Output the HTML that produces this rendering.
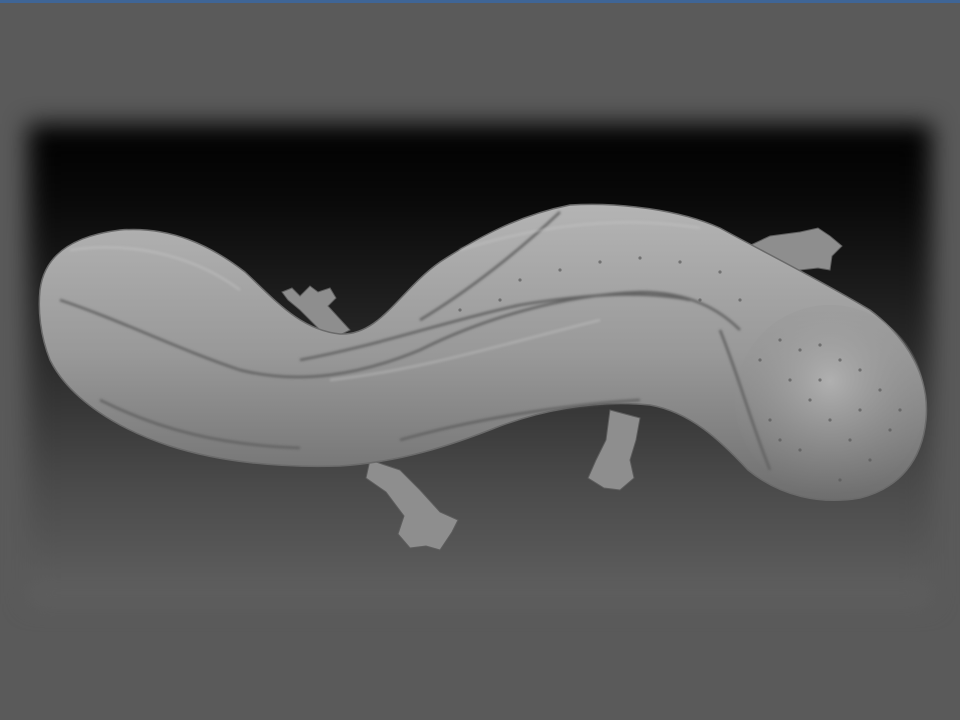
<!DOCTYPE html>
<html><head><meta charset="utf-8"><style>
html,body{margin:0;padding:0;width:960px;height:720px;overflow:hidden;background:#5a5a5a;font-family:"Liberation Sans",sans-serif}
.top{position:absolute;left:0;top:0;width:960px;height:3px;background:#3f6596}
.panel{position:absolute;left:28px;top:124px;width:904px;height:480px;background:linear-gradient(#000 0%,#080808 15%,#262626 45%,#4a4a4a 75%,#606060 100%);filter:blur(12px)}
svg{position:absolute;left:0;top:0}
</style></head><body>
<div class="top"></div>
<div class="panel"></div>
<svg width="960" height="720" viewBox="0 0 960 720">
<defs>
<linearGradient id="b" x1="0" y1="0" x2="0" y2="1">
<stop offset="0" stop-color="#b4b4b4"/><stop offset="0.5" stop-color="#999"/><stop offset="1" stop-color="#6e6e6e"/>
</linearGradient>
<radialGradient id="h" cx="0.5" cy="0.4" r="0.6">
<stop offset="0" stop-color="#b0b0b0"/><stop offset="1" stop-color="#8a8a8a" stop-opacity="0"/>
</radialGradient>
<filter id="s"><feGaussianBlur stdDeviation="1.2"/></filter>
</defs>
<g fill="#8e8e8e" stroke="#5e5e5e" stroke-width="1">
<path d="M330 340 L300 310 L288 300 L282 292 L292 288 L300 296 L310 286 L318 292 L330 288 L336 298 L328 306 L350 330 Z"/>
<path d="M740 250 L770 236 L800 232 L818 228 L830 236 L842 246 L832 256 L830 270 L818 268 L800 270 L780 272 L760 272 Z"/>
<path d="M370 460 L400 470 L420 490 L440 512 L458 520 L452 532 L440 550 L426 546 L410 548 L398 534 L404 516 L386 492 L366 478 Z"/>
<path d="M610 410 L640 418 L636 440 L630 460 L634 478 L620 490 L604 488 L588 478 L596 460 L606 440 Z"/>
</g>
<path d="M40 290 C45 250 80 235 120 230 C170 226 210 245 245 272 C275 300 300 330 340 334 C380 336 400 290 440 262 C480 236 520 215 570 205 C620 202 680 210 720 228 C760 250 820 280 870 310 C910 340 930 380 926 420 C922 460 900 488 860 498 C820 505 780 496 748 470 C720 440 690 412 650 405 C600 400 550 408 500 426 C450 446 400 462 340 466 C280 468 220 462 170 446 C120 430 70 400 50 360 C40 335 38 310 40 290 Z" fill="url(#b)" stroke="#6a6a6a" stroke-width="1.5"/>
<ellipse cx="830" cy="400" rx="95" ry="95" fill="url(#h)"/>
<g fill="none" stroke="#626262" stroke-width="2.5" filter="url(#s)">
<path d="M60 300 C120 320 180 350 240 370 C300 385 360 375 420 350 C480 320 560 295 640 292 C690 292 720 310 740 330"/>
<path d="M300 360 C380 345 450 320 520 305 C580 295 640 290 690 300"/>
<path d="M400 440 C470 420 560 405 640 400"/>
<path d="M100 400 C160 430 220 445 300 448"/>
<path d="M560 212 C520 250 470 290 420 320"/>
<path d="M720 330 C740 380 750 420 770 470"/>
</g>
<g fill="none" stroke="#c8c8c8" stroke-width="2" opacity="0.5" filter="url(#s)">
<path d="M70 250 C140 240 200 260 240 290"/>
<path d="M460 250 C540 225 620 215 700 228"/>
<path d="M330 380 C420 370 500 345 600 320"/>
</g>
<g fill="#5a5a5a" opacity="0.7">
<circle cx="780" cy="340" r="1.6"/><circle cx="800" cy="350" r="1.6"/><circle cx="820" cy="345" r="1.6"/><circle cx="840" cy="360" r="1.6"/><circle cx="860" cy="370" r="1.6"/><circle cx="880" cy="390" r="1.6"/><circle cx="790" cy="380" r="1.6"/><circle cx="810" cy="400" r="1.6"/><circle cx="830" cy="420" r="1.6"/><circle cx="850" cy="440" r="1.6"/><circle cx="870" cy="460" r="1.6"/><circle cx="890" cy="430" r="1.6"/><circle cx="770" cy="420" r="1.6"/><circle cx="800" cy="450" r="1.6"/><circle cx="840" cy="480" r="1.6"/><circle cx="900" cy="410" r="1.6"/><circle cx="760" cy="360" r="1.6"/><circle cx="820" cy="380" r="1.6"/><circle cx="860" cy="410" r="1.6"/><circle cx="780" cy="440" r="1.6"/>
<circle cx="520" cy="280" r="1.6"/><circle cx="560" cy="270" r="1.6"/><circle cx="600" cy="262" r="1.6"/><circle cx="640" cy="258" r="1.6"/><circle cx="680" cy="262" r="1.6"/><circle cx="720" cy="272" r="1.6"/><circle cx="500" cy="300" r="1.6"/><circle cx="460" cy="310" r="1.6"/><circle cx="700" cy="300" r="1.6"/><circle cx="740" cy="300" r="1.6"/>
</g>
</svg>
</body></html>
